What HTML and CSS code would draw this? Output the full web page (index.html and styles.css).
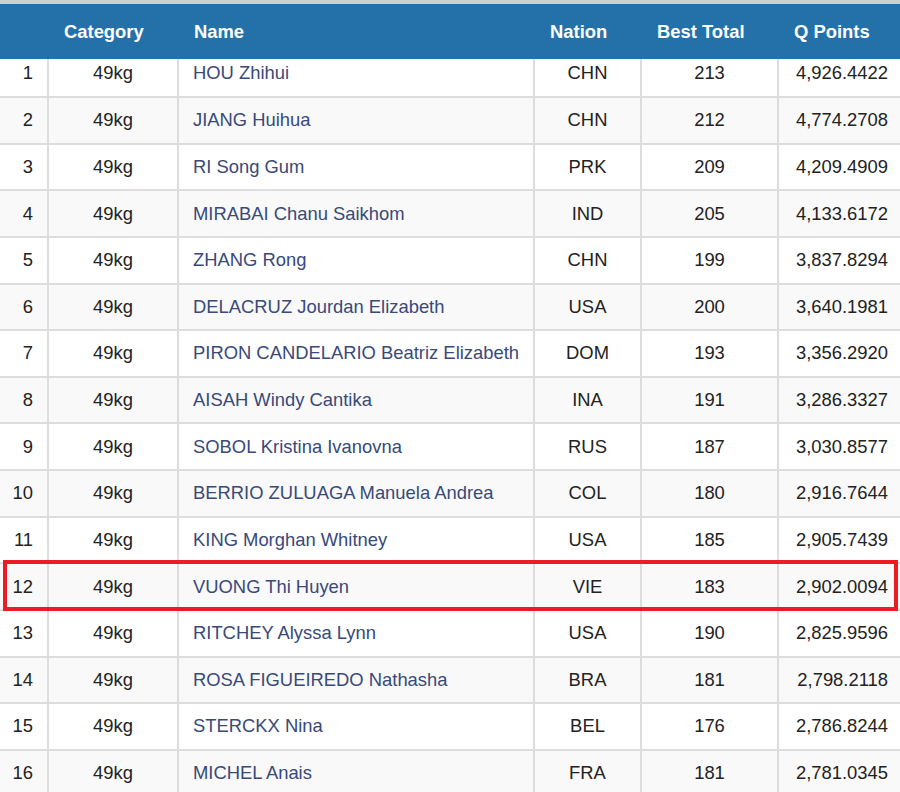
FILE: index.html
```html
<!DOCTYPE html>
<html>
<head>
<meta charset="utf-8">
<link rel="stylesheet" href="styles.css">
</head>
<body>
<div class="page">
  <div class="topbar"></div>
  <div class="wrap">
    <table class="rank">
      <colgroup>
        <col class="c-pos"><col class="c-cat"><col class="c-name"><col class="c-nat"><col class="c-best"><col class="c-q">
      </colgroup>
      <thead>
        <tr><th></th><th>Category</th><th>Name</th><th>Nation</th><th>Best Total</th><th>Q Points</th></tr>
      </thead>
      <tbody>
        <tr class="first"><td class="pos">1</td><td class="mid">49kg</td><td class="name">HOU Zhihui</td><td class="mid">CHN</td><td class="mid">213</td><td class="q">4,926.4422</td></tr>
        <tr><td class="pos">2</td><td class="mid">49kg</td><td class="name">JIANG Huihua</td><td class="mid">CHN</td><td class="mid">212</td><td class="q">4,774.2708</td></tr>
        <tr><td class="pos">3</td><td class="mid">49kg</td><td class="name">RI Song Gum</td><td class="mid">PRK</td><td class="mid">209</td><td class="q">4,209.4909</td></tr>
        <tr><td class="pos">4</td><td class="mid">49kg</td><td class="name">MIRABAI Chanu Saikhom</td><td class="mid">IND</td><td class="mid">205</td><td class="q">4,133.6172</td></tr>
        <tr><td class="pos">5</td><td class="mid">49kg</td><td class="name">ZHANG Rong</td><td class="mid">CHN</td><td class="mid">199</td><td class="q">3,837.8294</td></tr>
        <tr><td class="pos">6</td><td class="mid">49kg</td><td class="name">DELACRUZ Jourdan Elizabeth</td><td class="mid">USA</td><td class="mid">200</td><td class="q">3,640.1981</td></tr>
        <tr><td class="pos">7</td><td class="mid">49kg</td><td class="name">PIRON CANDELARIO Beatriz Elizabeth</td><td class="mid">DOM</td><td class="mid">193</td><td class="q">3,356.2920</td></tr>
        <tr><td class="pos">8</td><td class="mid">49kg</td><td class="name">AISAH Windy Cantika</td><td class="mid">INA</td><td class="mid">191</td><td class="q">3,286.3327</td></tr>
        <tr><td class="pos">9</td><td class="mid">49kg</td><td class="name">SOBOL Kristina Ivanovna</td><td class="mid">RUS</td><td class="mid">187</td><td class="q">3,030.8577</td></tr>
        <tr><td class="pos">10</td><td class="mid">49kg</td><td class="name">BERRIO ZULUAGA Manuela Andrea</td><td class="mid">COL</td><td class="mid">180</td><td class="q">2,916.7644</td></tr>
        <tr><td class="pos">11</td><td class="mid">49kg</td><td class="name">KING Morghan Whitney</td><td class="mid">USA</td><td class="mid">185</td><td class="q">2,905.7439</td></tr>
        <tr><td class="pos">12</td><td class="mid">49kg</td><td class="name">VUONG Thi Huyen</td><td class="mid">VIE</td><td class="mid">183</td><td class="q">2,902.0094</td></tr>
        <tr><td class="pos">13</td><td class="mid">49kg</td><td class="name">RITCHEY Alyssa Lynn</td><td class="mid">USA</td><td class="mid">190</td><td class="q">2,825.9596</td></tr>
        <tr><td class="pos">14</td><td class="mid">49kg</td><td class="name">ROSA FIGUEIREDO Nathasha</td><td class="mid">BRA</td><td class="mid">181</td><td class="q">2,798.2118</td></tr>
        <tr><td class="pos">15</td><td class="mid">49kg</td><td class="name">STERCKX Nina</td><td class="mid">BEL</td><td class="mid">176</td><td class="q">2,786.8244</td></tr>
        <tr><td class="pos">16</td><td class="mid">49kg</td><td class="name">MICHEL Anais</td><td class="mid">FRA</td><td class="mid">181</td><td class="q">2,781.0345</td></tr>
      </tbody>
    </table>
    <div class="highlight"></div>
  </div>
</div>
</body>
</html>
```

FILE: styles.css
```css
html, body {
  margin: 0;
  padding: 0;
  background: #ffffff;
}
body {
  font-family: "Liberation Sans", Arial, sans-serif;
  font-size: 18.4px;
  color: #222222;
}
.page {
  width: 900px;
  height: 792px;
  overflow: hidden;
}
.topbar {
  height: 4px;
  background: #cfcfcf;
}
.wrap {
  position: relative;
}
.rank {
  width: 900px;
  border-collapse: collapse;
  table-layout: fixed;
}
.c-pos { width: 48px; }
.c-cat { width: 130px; }
.c-name { width: 356px; }
.c-nat { width: 107px; }
.c-best { width: 137px; }
.c-q { width: 122px; }

.rank thead th {
  background: #2471a9;
  color: #ffffff;
  font-weight: bold;
  text-align: left;
  height: 55px;
  padding: 0 0 0 16px;
  vertical-align: middle;
  border: none;
}
.rank td {
  height: 44.64px;
  padding: 0 12px;
  vertical-align: middle;
  border-top: 2px solid #dddddd;
  border-left: 2px solid #dddddd;
  line-height: 20px;
  white-space: nowrap;
}
.rank td:first-child {
  border-left: none;
}
.rank tbody tr.first td {
  border-top: none;
  height: 27px;
  padding-bottom: 10px;
}
.rank tbody tr:nth-child(even) td {
  background: #f9f9f9;
}
.pos {
  text-align: right;
  padding-right: 14px !important;
}
.mid {
  text-align: center;
}
.name {
  text-align: left;
  padding-left: 14px !important;
  color: #38497a;
}
.q {
  text-align: right;
}
.highlight {
  position: absolute;
  left: 3px;
  top: 556px;
  width: 887px;
  height: 43px;
  border: 4px solid #ed1c24;
}
```
